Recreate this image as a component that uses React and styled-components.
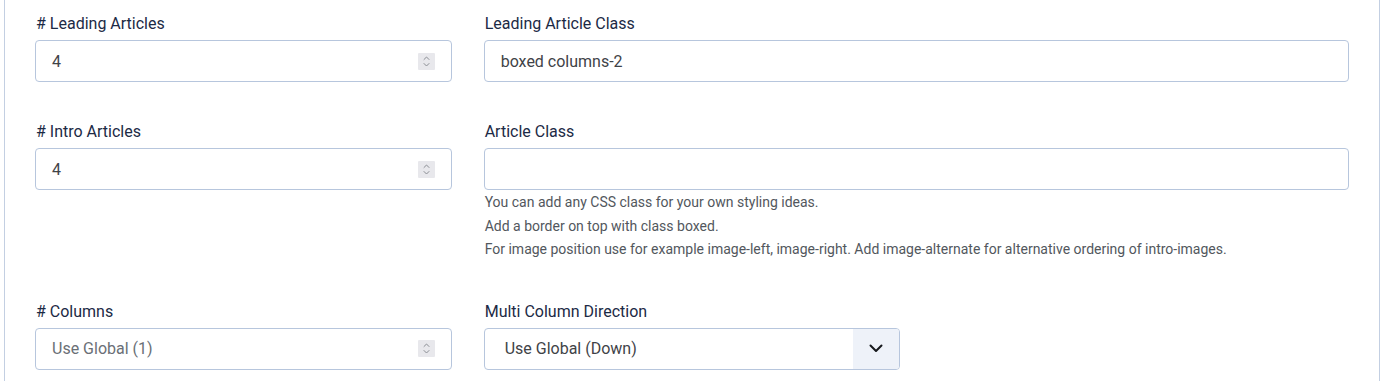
import React from "react";
import styled, { createGlobalStyle } from "styled-components";

const Global = createGlobalStyle`
  html, body { margin: 0; padding: 0; background: #fff; }
  body { font-family: Roboto, "Liberation Sans", Arial, sans-serif; }
`;

const Panel = styled.div`
  margin-left: 4px;
  width: 1376px;
  box-sizing: border-box;
  border-left: 1px solid #c3cfe2;
  border-right: 1px solid #c3cfe2;
  padding: 12px 30px 0 30px;
  min-height: 100vh;
`;

const Row = styled.div`
  display: grid;
  grid-template-columns: calc((100% + 32px) / 3 - 32px) 1fr;
  column-gap: 32px;
  margin-bottom: 38px;
  &:last-child { margin-bottom: 0; }
`;

const Field = styled.div`
  display: flex;
  flex-direction: column;
  min-width: 0;
`;

const Label = styled.label`
  font-size: 16px;
  line-height: 24px;
  color: #1c2a45;
  margin-bottom: 4px;
  padding-left: 1px;
`;

const Box = styled.div`
  position: relative;
  box-sizing: border-box;
  height: 42px;
  width: ${(p) => p.$width || "100%"};
  border: 1px solid #b7c6dd;
  border-radius: 4px;
  background: #fff;
  display: flex;
  align-items: center;
  padding-left: ${(p) => p.$pad || 16}px;
  font-size: 16px;
  color: ${(p) => (p.$muted ? "#6a6f76" : "#3f4347")};
  overflow: hidden;
`;

const Value = styled.span`
  flex: 1;
`;

const Spinner = styled.span`
  width: 17px;
  height: 17px;
  margin-right: 16px;
  background: #e8e8ec;
  border-radius: 1px;
  display: flex;
  align-items: center;
  justify-content: center;
`;

const SelectButton = styled.span`
  align-self: stretch;
  width: 46px;
  background: #eef2f9;
  display: flex;
  align-items: center;
  justify-content: center;
  color: #16191d;
`;

const Help = styled.div`
  margin-top: 1px;
  font-size: 14px;
  line-height: 23.5px;
  color: #52575d;
  padding-left: 1px;
`;

const SpinIcon = () => (
  <svg width="9" height="13" viewBox="0 0 9 13" fill="none" stroke="#8a8d93" strokeWidth="1" strokeLinecap="round" strokeLinejoin="round">
    <path d="M2 4.5 L4.5 2 L7 4.5" />
    <path d="M2 8.5 L4.5 11 L7 8.5" />
  </svg>
);

const Chevron = () => (
  <svg width="14" height="9" viewBox="0 0 14 9" fill="none" stroke="currentColor" strokeWidth="2" strokeLinecap="round" strokeLinejoin="round">
    <path d="M1.5 1.5 L7 7 L12.5 1.5" />
  </svg>
);

export default function App() {
  return (
    <>
      <Global />
      <Panel>
        <Row>
          <Field>
            <Label># Leading Articles</Label>
            <Box>
              <Value>4</Value>
              <Spinner><SpinIcon /></Spinner>
            </Box>
          </Field>
          <Field>
            <Label>Leading Article Class</Label>
            <Box>
              <Value>boxed columns-2</Value>
            </Box>
          </Field>
        </Row>
        <Row>
          <Field>
            <Label># Intro Articles</Label>
            <Box>
              <Value>4</Value>
              <Spinner><SpinIcon /></Spinner>
            </Box>
          </Field>
          <Field>
            <Label>Article Class</Label>
            <Box>
              <Value />
            </Box>
            <Help>
              You can add any CSS class for your own styling ideas.
              <br />
              Add a border on top with class boxed.
              <br />
              For image position use for example image-left, image-right. Add image-alternate for alternative ordering of intro-images.
            </Help>
          </Field>
        </Row>
        <Row>
          <Field>
            <Label># Columns</Label>
            <Box $muted>
              <Value>Use Global (1)</Value>
              <Spinner><SpinIcon /></Spinner>
            </Box>
          </Field>
          <Field>
            <Label>Multi Column Direction</Label>
            <Box $width="416px" $pad={20}>
              <Value>Use Global (Down)</Value>
              <SelectButton><Chevron /></SelectButton>
            </Box>
          </Field>
        </Row>
      </Panel>
    </>
  );
}
